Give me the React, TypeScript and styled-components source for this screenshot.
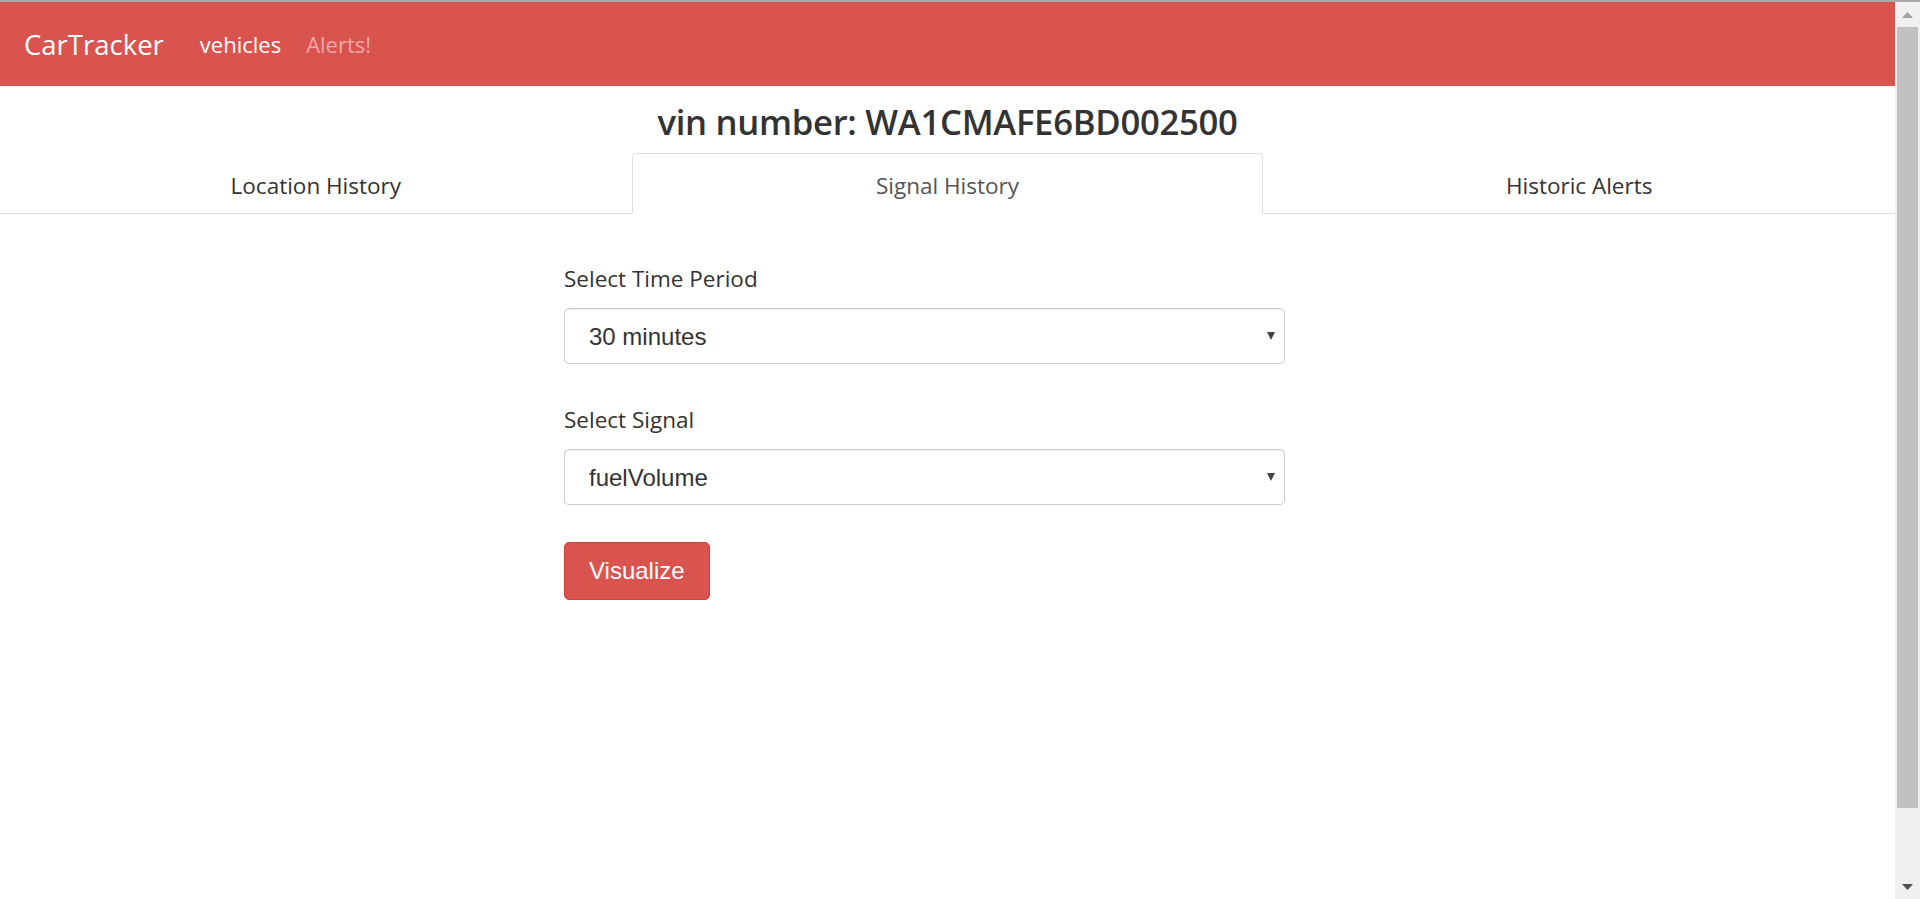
import React from "react";
import styled, { createGlobalStyle } from "styled-components";

const Global = createGlobalStyle`
  html, body { margin: 0; padding: 0; height: 100%; overflow: hidden; }
  body { font-family: "Open Sans", "Noto Sans", sans-serif; color: #333; background: #fff; }
  #root { height: 100%; }
  * { box-sizing: border-box; }
`;

const Page = styled.div`
  display: flex;
  height: 899px;
  border-top: 2px solid #ababab;
`;

const Main = styled.div`
  flex: 1;
  min-width: 0;
  display: flex;
  flex-direction: column;
`;

const Navbar = styled.nav`
  height: 84px;
  background: #d9534f;
  display: flex;
  align-items: center;
  padding-left: 24px;
`;

const Brand = styled.a`
  font-size: 27.5px;
  color: #fff;
  text-decoration: none;
  margin-right: 36px;
`;

const NavLink = styled.a<{ $dim?: boolean }>`
  font-size: 22px;
  color: ${(p) => (p.$dim ? "rgba(255,255,255,0.5)" : "#fff")};
  text-decoration: none;
  margin-right: 25px;
`;

const Title = styled.h1`
  margin: 0;
  height: 67px;
  padding-top: 4px;
  display: flex;
  align-items: center;
  justify-content: center;
  font-size: 34.7px;
  font-weight: 600;
  color: #333;
  letter-spacing: -0.3px;
`;

const Tabs = styled.ul`
  list-style: none;
  margin: 0;
  padding: 0;
  display: grid;
  grid-template-columns: 1fr 1fr 1fr;
  border-bottom: 1px solid #ddd;
`;

const Tab = styled.li<{ $active?: boolean }>`
  height: 61px;
  margin-bottom: -1px;
  padding-top: 4px;
  display: flex;
  align-items: center;
  justify-content: center;
  font-size: 22.5px;
  color: ${(p) => (p.$active ? "#555" : "#333")};
  border: 1px solid ${(p) => (p.$active ? "#ddd" : "transparent")};
  border-bottom-color: ${(p) => (p.$active ? "#fff" : "transparent")};
  border-radius: 5px 5px 0 0;
  background: ${(p) => (p.$active ? "#fff" : "transparent")};
`;

const Form = styled.form`
  width: 721px;
  margin-left: 564px;
  padding-top: 51px;
  display: flex;
  flex-direction: column;
`;

const Group = styled.div`
  display: flex;
  flex-direction: column;
  margin-bottom: 42px;
  &:last-of-type {
    margin-bottom: 37px;
  }
`;

const Label = styled.label`
  font-size: 22.5px;
  color: #333;
  line-height: 28px;
  margin-bottom: 15px;
`;

const SelectWrap = styled.div`
  position: relative;
  height: 56px;
`;

const Select = styled.select`
  appearance: none;
  -webkit-appearance: none;
  width: 100%;
  height: 56px;
  padding: 0 40px 0 24px;
  font-family: "Liberation Sans", Arial, sans-serif;
  font-size: 24px;
  color: #333;
  background: #fff;
  border: 1px solid #ccc;
  border-radius: 5px;
  box-shadow: inset 0 1px 1px rgba(0, 0, 0, 0.075);
  outline: none;
`;

const Caret = styled.span`
  position: absolute;
  right: 10px;
  top: 50%;
  transform: translateY(-50%);
  width: 0;
  height: 0;
  border-left: 4px solid transparent;
  border-right: 4px solid transparent;
  border-top: 8px solid #444;
  pointer-events: none;
`;

const Button = styled.button`
  align-self: flex-start;
  height: 58px;
  padding: 0 24px;
  font-family: "Liberation Sans", Arial, sans-serif;
  font-size: 24px;
  color: #fff;
  background: #d9534f;
  border: 1px solid #d43f3a;
  border-radius: 5px;
`;

const ScrollTrack = styled.div`
  width: 25px;
  background: #f0f0f0;
  display: flex;
  flex-direction: column;
  align-items: center;
`;

const ArrowBox = styled.div`
  height: 25px;
  width: 25px;
  display: flex;
  align-items: center;
  justify-content: center;
`;

const Thumb = styled.div`
  width: 21px;
  height: 781px;
  background: #c1c1c1;
`;

const Spacer = styled.div`
  flex: 1;
`;

export default function App() {
  return (
    <>
      <Global />
      <Page>
        <Main>
          <Navbar>
            <Brand href="#">CarTracker</Brand>
            <NavLink href="#">vehicles</NavLink>
            <NavLink href="#" $dim>
              Alerts!
            </NavLink>
          </Navbar>
          <Title>vin number: WA1CMAFE6BD002500</Title>
          <Tabs>
            <Tab>Location History</Tab>
            <Tab $active>Signal History</Tab>
            <Tab>Historic Alerts</Tab>
          </Tabs>
          <Form onSubmit={(e) => e.preventDefault()}>
            <Group>
              <Label>Select Time Period</Label>
              <SelectWrap>
                <Select defaultValue="30">
                  <option value="30">30 minutes</option>
                  <option value="60">1 hour</option>
                </Select>
                <Caret />
              </SelectWrap>
            </Group>
            <Group>
              <Label>Select Signal</Label>
              <SelectWrap>
                <Select defaultValue="fuelVolume">
                  <option value="fuelVolume">fuelVolume</option>
                  <option value="speed">speed</option>
                </Select>
                <Caret />
              </SelectWrap>
            </Group>
            <Button type="submit">Visualize</Button>
          </Form>
        </Main>
        <ScrollTrack>
          <ArrowBox>
            <svg width="11" height="6" viewBox="0 0 11 6">
              <path d="M0 6 L5.5 0 L11 6 Z" fill="#a3a3a3" />
            </svg>
          </ArrowBox>
          <Thumb />
          <Spacer />
          <ArrowBox>
            <svg width="11" height="6" viewBox="0 0 11 6">
              <path d="M0 0 L5.5 6 L11 0 Z" fill="#505050" />
            </svg>
          </ArrowBox>
        </ScrollTrack>
      </Page>
    </>
  );
}
